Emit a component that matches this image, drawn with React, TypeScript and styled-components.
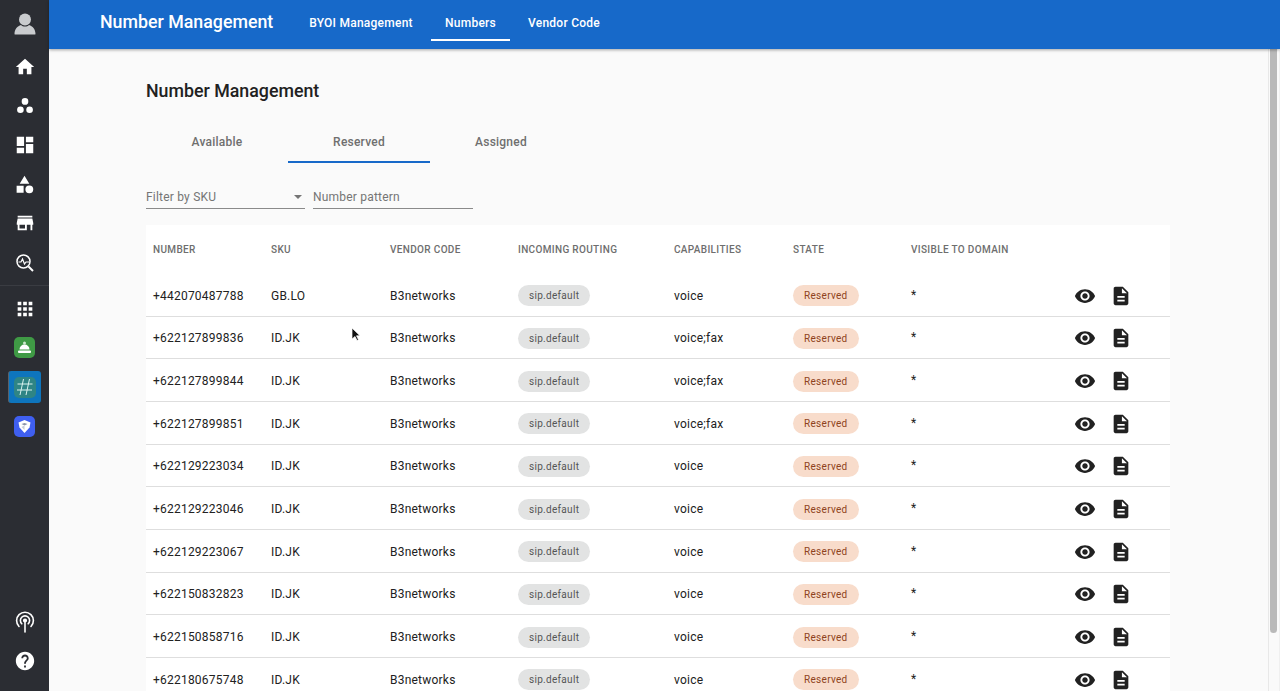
import React from "react";
import styled, { createGlobalStyle } from "styled-components";

const Global = createGlobalStyle`
  html, body { margin: 0; padding: 0; height: 100%; overflow: hidden; }
  body { font-family: Roboto, "Liberation Sans", sans-serif; background: #fafafa; }
  #root { height: 691px; }
`;

const Shell = styled.div`
  display: flex;
  width: 1280px;
  height: 691px;
  overflow: hidden;
`;

const Rail = styled.nav`
  width: 49px;
  flex: none;
  background: #2b2d33;
  display: flex;
  flex-direction: column;
  align-items: center;
  color: #fff;
  padding-bottom: 11px;
  box-sizing: border-box;
`;

const RailAvatar = styled.div`
  height: 47px;
  flex: none;
  display: flex;
  align-items: center;
  justify-content: center;
`;

const RailGroup = styled.div`
  display: flex;
  flex-direction: column;
  align-items: center;
  width: 100%;
`;

const RailMainGroup = styled(RailGroup)`
  border-bottom: 1px solid #3a3c42;
  padding-bottom: 3px;
  margin-bottom: 3px;
`;

const RailItem = styled.div`
  height: 39.2px;
  width: 100%;
  display: flex;
  align-items: center;
  justify-content: center;
`;

const RailFootItem = styled(RailItem)`
  height: 38.5px;
`;

const RailSpacer = styled.div`
  flex: 1;
`;

const AppTile = styled.div<{ $bg: string }>`
  width: 21px;
  height: 21px;
  border-radius: 5px;
  background: ${(p) => p.$bg};
  display: flex;
  align-items: center;
  justify-content: center;
`;

const ActiveTile = styled.div`
  width: 33px;
  height: 32px;
  border-radius: 3px;
  background: #0e75bd;
  border-left: 1px solid #5b6068;
  box-sizing: border-box;
  display: flex;
  align-items: center;
  justify-content: center;
`;

const HashTile = styled.div`
  width: 22px;
  height: 21px;
  border-radius: 5px;
  background: #2f8585;
  display: flex;
  align-items: center;
  justify-content: center;
`;

const Page = styled.div`
  flex: 1;
  min-width: 0;
  display: flex;
  flex-direction: column;
  position: relative;
`;

const TopBar = styled.header`
  height: 49px;
  flex: none;
  background: #1769c9;
  color: #fff;
  display: flex;
  align-items: flex-start;
  padding-left: 51px;
  box-shadow: 0 1px 3px rgba(0, 0, 0, 0.35);
  position: relative;
  z-index: 2;
`;

const TopTitle = styled.div`
  font-size: 17.8px;
  font-weight: 500;
  line-height: 43px;
  width: 191px;
  white-space: nowrap;
`;

const TopLink = styled.div<{ $active?: boolean; $w: number }>`
  width: ${(p) => p.$w}px;
  font-size: 12px;
  font-weight: 500;
  letter-spacing: 0.25px;
  line-height: 46px;
  text-align: center;
  height: 41px;
  box-sizing: border-box;
  border-bottom: 2px solid ${(p) => (p.$active ? "#fff" : "transparent")};
  white-space: nowrap;
`;

const Content = styled.main`
  flex: 1;
  min-height: 0;
  padding: 0 110px 0 97px;
  overflow: hidden;
`;

const Heading = styled.h1`
  margin: 31px 0 0;
  font-size: 17.8px;
  font-weight: 500;
  line-height: 22px;
  color: #212121;
`;

const Tabs = styled.div`
  display: flex;
  margin-top: 18px;
`;

const Tab = styled.div<{ $active?: boolean }>`
  width: 142px;
  height: 43px;
  box-sizing: border-box;
  text-align: center;
  font-size: 12px;
  font-weight: 500;
  letter-spacing: 0.22px;
  line-height: 45px;
  color: #6f6f6f;
  border-bottom: 2px solid ${(p) => (p.$active ? "#1769c9" : "transparent")};
`;

const Filters = styled.div`
  display: flex;
  gap: 8px;
  margin-top: 21px;
`;

const Field = styled.div<{ $w: number }>`
  width: ${(p) => p.$w}px;
  height: 25px;
  box-sizing: border-box;
  border-bottom: 1px solid #8a8a8a;
  display: flex;
  align-items: center;
  justify-content: space-between;
  font-size: 12px;
  letter-spacing: 0.2px;
  color: #757575;
  padding-top: 1px;
`;

const Caret = styled.span`
  width: 0;
  height: 0;
  margin-right: 3px;
  border-left: 4.5px solid transparent;
  border-right: 4.5px solid transparent;
  border-top: 4.5px solid #757575;
`;

const Table = styled.div`
  margin-top: 16px;
  background: #fff;
`;

const columns = "118px 119px 128px 156px 119px 118px 163px 1fr";

const HeadRow = styled.div`
  display: grid;
  grid-template-columns: ${columns};
  padding-left: 7px;
  height: 49px;
  padding-top: 18px;
  box-sizing: border-box;
  font-size: 10px;
  font-weight: 500;
  line-height: 14px;
  color: #6e6e6e;
  letter-spacing: 0.34px;
`;

const Row = styled.div`
  display: grid;
  grid-template-columns: ${columns};
  padding-left: 7px;
  padding-top: 2px;
  height: 42.67px;
  box-sizing: border-box;
  align-items: center;
  font-size: 12px;
  letter-spacing: 0.22px;
  color: #212121;
  border-bottom: 1px solid #dedede;
`;

const Pill = styled.span<{ $state?: boolean }>`
  display: inline-block;
  height: 21px;
  box-sizing: border-box;
  padding: 0 11px;
  border-radius: 11px;
  font-size: 10px;
  letter-spacing: 0.3px;
  line-height: 21px;
  background: ${(p) => (p.$state ? "#f8dccb" : "#e2e3e3")};
  color: ${(p) => (p.$state ? "#8f4320" : "#555")};
  justify-self: start;
`;

const Star = styled.div`
  margin-bottom: 2px;
`;

const Actions = styled.div`
  display: flex;
  align-items: center;
  gap: 14px;
  color: #212121;
`;

const Icon = styled.svg`
  display: block;
  fill: currentColor;
`;

const Scrollbar = styled.div`
  position: absolute;
  right: 0;
  top: 49px;
  bottom: 0;
  width: 12px;
  background: #fafafa;
  border-left: 1px solid #e8e8e8;
  border-right: 1px solid #f0f0f0;
  box-sizing: border-box;
`;

const ScrollThumb = styled.div`
  position: absolute;
  left: 1px;
  top: 0;
  width: 7px;
  height: 584px;
  border-radius: 0 0 4px 4px;
  background: #b9b9b9;
`;

const Ico = ({ d, size = 22 }: { d: string; size?: number }) => (
  <Icon width={size} height={size} viewBox="0 0 24 24">
    <path d={d} />
  </Icon>
);

const mdi = {
  home: "M10 20v-6h4v6h5v-8h3L12 3 2 12h3v8z",
  hub: "M12 2.5a4 4 0 1 0 0 8 4 4 0 0 0 0-8zM6.5 12.5a4 4 0 1 0 0 8 4 4 0 0 0 0-8zM17.5 12.5a4 4 0 1 0 0 8 4 4 0 0 0 0-8z",
  dash: "M3 13h8V3H3v10zm0 8h8v-6H3v6zm10 0h8V11h-8v10zm0-18v6h8V3h-8z",
  cat: "M12 2l-5.5 9h11zM17.5 13a4.5 4.5 0 1 0 0 9 4.5 4.5 0 0 0 0-9zM3 13.5h8v8H3z",
  store: "M20 4H4v2h16V4zm1 10v-2l-1-5H4l-1 5v2h1v6h10v-6h4v6h2v-6h1zm-9 4H6v-4h6v4z",
  apps: "M4 8h4V4H4v4zm6 12h4v-4h-4v4zm-6 0h4v-4H4v4zm0-6h4v-4H4v4zm6 0h4v-4h-4v4zm6-10v4h4V4h-4zm-6 4h4V4h-4v4zm6 6h4v-4h-4v4zm0 6h4v-4h-4v4z",
  help: "M12 2C6.48 2 2 6.48 2 12s4.48 10 10 10 10-4.48 10-10S17.52 2 12 2zm1 17h-2v-2h2v2zm2.07-7.75l-.9.92C13.45 12.9 13 13.5 13 15h-2v-.5c0-1.1.45-2.1 1.17-2.83l1.24-1.26c.37-.36.59-.86.59-1.41 0-1.1-.9-2-2-2s-2 .9-2 2H8c0-2.21 1.79-4 4-4s4 1.79 4 4c0 .88-.36 1.68-.93 2.25z",
  eye: "M12 4.5C7 4.5 2.73 7.61 1 12c1.73 4.39 6 7.5 11 7.5s9.27-3.11 11-7.5c-1.73-4.39-6-7.5-11-7.5zM12 17c-2.76 0-5-2.24-5-5s2.24-5 5-5 5 2.24 5 5-2.24 5-5 5zm0-8c-1.66 0-3 1.34-3 3s1.34 3 3 3 3-1.34 3-3-1.34-3-3-3z",
  doc: "M14 2H6c-1.1 0-2 .9-2 2v16c0 1.1.9 2 2 2h12c1.1 0 2-.9 2-2V8l-6-6zm2 16H8v-2h8v2zm0-4H8v-2h8v2zm-3-5V3.5L18.5 9H13z",
};

const AvatarIcon = () => (
  <svg width="24" height="24" viewBox="0 0 24 24">
    <circle cx="12" cy="7.5" r="6" fill="#c9cbce" />
    <path d="M1.5 22c0-5 3-8 6.5-9 2 2 6 2 8 0 3.5 1 6.5 4 6.5 9 0 .5-.5.5-1 .5H2.500c-.5 0-1 0-1-.5z" fill="#c9cbce" />
  </svg>
);

const Monitor = () => (
  <svg width="20" height="20" viewBox="0 0 20 20" fill="none" stroke="#fff">
    <circle cx="8.5" cy="8.5" r="6.5" strokeWidth="1.5" />
    <path d="M13.5 13.5L18 18" strokeWidth="2" />
    <path d="M3.5 9h2.5l1.5-3 2 5 1.5-2h3" strokeWidth="1.2" />
  </svg>
);

const Hash = () => (
  <svg width="18" height="18" viewBox="0 0 18 18" fill="none" stroke="#d9f2ee" strokeWidth="1">
    <path d="M7.5 1L4 17M13.5 1L10 17M1.5 6h15M1 12h15" />
  </svg>
);

const Bell = () => (
  <svg width="15" height="13" viewBox="0 0 15 13" fill="#fff">
    <circle cx="7.5" cy="2" r="1.5" fill="#cfe8cf" />
    <path d="M2.5 8.5a5 5 0 0 1 10 0z" />
    <rect x="1" y="9.5" width="13" height="2.5" rx="1" />
  </svg>
);

const Box = () => (
  <svg width="15" height="15" viewBox="0 0 15 15">
    <path d="M1.5 3.500L7.500 1l6 2.500-1 5-5 5.500-5-5.500z" fill="#fff" />
    <path d="M4.500 5l3-1 3 1-3 1.500z" fill="#8a93a8" />
    <path d="M7.500 6.500V11l-3-3z" fill="#c6cbd6" />
  </svg>
);

const Antenna = () => (
  <svg width="20" height="22" viewBox="0 0 20 22" fill="none" stroke="#fff" strokeWidth="1.6" strokeLinecap="round">
    <path d="M10 10.5V21" />
    <circle cx="10" cy="9.5" r="1.3" fill="#fff" />
    <path d="M6.8 12.8a4.6 4.6 0 1 1 6.4 0" />
    <path d="M4 15.5a8.4 8.4 0 1 1 12 0" />
  </svg>
);

const Cursor = styled.svg`
  position: absolute;
  left: 302px;
  top: 327px;
  z-index: 3;
`;

const rows: [string, string, string][] = [
  ["+442070487788", "GB.LO", "voice"],
  ["+622127899836", "ID.JK", "voice;fax"],
  ["+622127899844", "ID.JK", "voice;fax"],
  ["+622127899851", "ID.JK", "voice;fax"],
  ["+622129223034", "ID.JK", "voice"],
  ["+622129223046", "ID.JK", "voice"],
  ["+622129223067", "ID.JK", "voice"],
  ["+622150832823", "ID.JK", "voice"],
  ["+622150858716", "ID.JK", "voice"],
  ["+622180675748", "ID.JK", "voice"],
];

const headers = ["NUMBER", "SKU", "VENDOR CODE", "INCOMING ROUTING", "CAPABILITIES", "STATE", "VISIBLE TO DOMAIN"];

export default function App() {
  return (
    <Shell>
      <Global />
      <Rail>
        <RailAvatar><AvatarIcon /></RailAvatar>
        <RailMainGroup>
          <RailItem><Ico d={mdi.home} /></RailItem>
          <RailItem><Ico d={mdi.hub} size={20} /></RailItem>
          <RailItem><Ico d={mdi.dash} /></RailItem>
          <RailItem><Ico d={mdi.cat} size={21} /></RailItem>
          <RailItem><Ico d={mdi.store} /></RailItem>
          <RailItem><Monitor /></RailItem>
        </RailMainGroup>
        <RailGroup>
          <RailItem><Ico d={mdi.apps} /></RailItem>
          <RailItem><AppTile $bg="#3f9a45"><Bell /></AppTile></RailItem>
          <RailItem><ActiveTile><HashTile><Hash /></HashTile></ActiveTile></RailItem>
          <RailItem><AppTile $bg="#3f5ff0"><Box /></AppTile></RailItem>
        </RailGroup>
        <RailSpacer />
        <RailGroup>
          <RailFootItem><Antenna /></RailFootItem>
          <RailFootItem><Ico d={mdi.help} /></RailFootItem>
        </RailGroup>
      </Rail>
      <Page>
        <TopBar>
          <TopTitle>Number Management</TopTitle>
          <TopLink $w={140}>BYOI Management</TopLink>
          <TopLink $w={79} $active>Numbers</TopLink>
          <TopLink $w={108}>Vendor Code</TopLink>
        </TopBar>
        <Content>
          <Heading>Number Management</Heading>
          <Tabs>
            <Tab>Available</Tab>
            <Tab $active>Reserved</Tab>
            <Tab>Assigned</Tab>
          </Tabs>
          <Filters>
            <Field $w={159}>Filter by SKU<Caret /></Field>
            <Field $w={160}>Number pattern</Field>
          </Filters>
          <Table>
            <HeadRow>
              {headers.map((h) => <div key={h}>{h}</div>)}
            </HeadRow>
            {rows.map(([num, sku, cap]) => (
              <Row key={num}>
                <div>{num}</div>
                <div>{sku}</div>
                <div>B3networks</div>
                <Pill>sip.default</Pill>
                <div>{cap}</div>
                <Pill $state>Reserved</Pill>
                <Star>*</Star>
                <Actions>
                  <Ico d={mdi.eye} />
                  <Ico d={mdi.doc} />
                </Actions>
              </Row>
            ))}
          </Table>
        </Content>
        <Scrollbar><ScrollThumb /></Scrollbar>
        <Cursor width="10" height="15" viewBox="0 0 10 15">
          <path d="M1 1v11l3-2.5 2 4 1.5-.7-2-4H9z" fill="#111" stroke="#fff" strokeWidth="0.7" />
        </Cursor>
      </Page>
    </Shell>
  );
}
